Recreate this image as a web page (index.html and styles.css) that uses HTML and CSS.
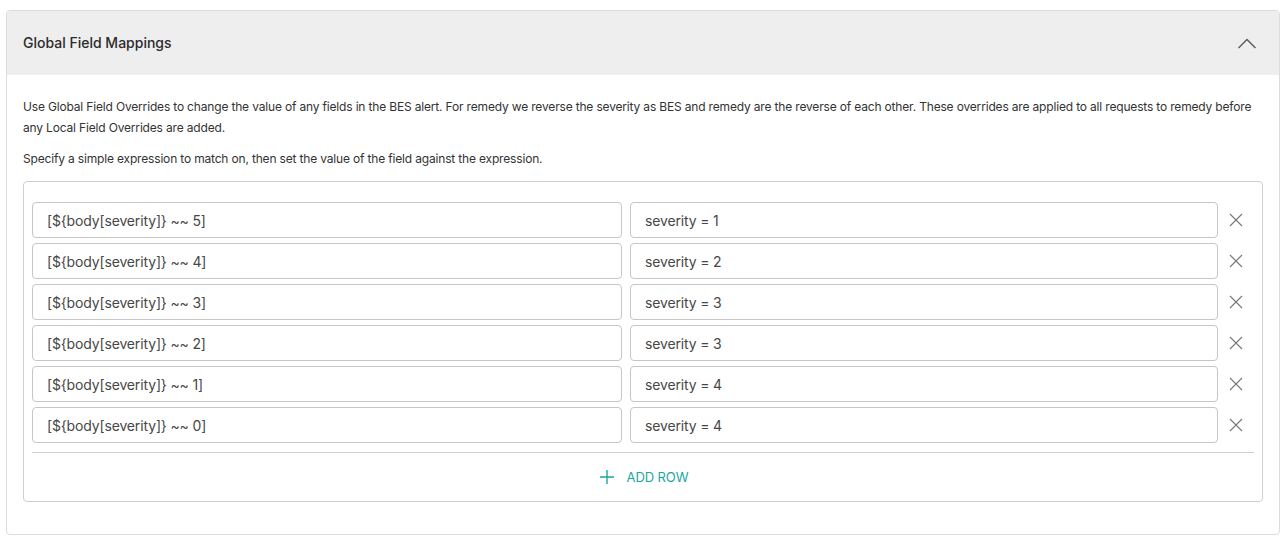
FILE: index.html
```html
<!DOCTYPE html>
<html>
<head>
<meta charset="utf-8">
<link rel="stylesheet" href="styles.css">
</head>
<body>
<div class="card">
  <div class="card-header">
    <div class="title">Global Field Mappings</div>
    <svg class="chevron" width="20" height="12" viewBox="0 0 20 12"><path d="M1.5 11 L10 2.5 L18.5 11" fill="none" stroke="#5f5f5f" stroke-width="1.5"/></svg>
  </div>
  <div class="card-body">
    <p class="desc">Use Global Field Overrides to change the value of any fields in the BES alert. For remedy we reverse the severity as BES and remedy are the reverse of each other. These overrides are applied to all requests to remedy before any Local Field Overrides are added.</p>
    <p class="desc second">Specify a simple expression to match on, then set the value of the field against the expression.</p>
    <div class="mappings">
      <div class="rows">
        <div class="row"><div class="input">[${body[severity]} ~~ 5]</div><div class="input">severity = 1</div><div class="remove"><svg width="14" height="14" viewBox="0 0 14 14"><path d="M1 1 L13 13 M13 1 L1 13" stroke="#777" stroke-width="1.1"/></svg></div></div>
        <div class="row"><div class="input">[${body[severity]} ~~ 4]</div><div class="input">severity = 2</div><div class="remove"><svg width="14" height="14" viewBox="0 0 14 14"><path d="M1 1 L13 13 M13 1 L1 13" stroke="#777" stroke-width="1.1"/></svg></div></div>
        <div class="row"><div class="input">[${body[severity]} ~~ 3]</div><div class="input">severity = 3</div><div class="remove"><svg width="14" height="14" viewBox="0 0 14 14"><path d="M1 1 L13 13 M13 1 L1 13" stroke="#777" stroke-width="1.1"/></svg></div></div>
        <div class="row"><div class="input">[${body[severity]} ~~ 2]</div><div class="input">severity = 3</div><div class="remove"><svg width="14" height="14" viewBox="0 0 14 14"><path d="M1 1 L13 13 M13 1 L1 13" stroke="#777" stroke-width="1.1"/></svg></div></div>
        <div class="row"><div class="input">[${body[severity]} ~~ 1]</div><div class="input">severity = 4</div><div class="remove"><svg width="14" height="14" viewBox="0 0 14 14"><path d="M1 1 L13 13 M13 1 L1 13" stroke="#777" stroke-width="1.1"/></svg></div></div>
        <div class="row"><div class="input">[${body[severity]} ~~ 0]</div><div class="input">severity = 4</div><div class="remove"><svg width="14" height="14" viewBox="0 0 14 14"><path d="M1 1 L13 13 M13 1 L1 13" stroke="#777" stroke-width="1.1"/></svg></div></div>
      </div>
      <div class="add-area">
        <div class="add-btn">
          <svg width="14" height="14" viewBox="0 0 14 14"><path d="M7 0 V14 M0 7 H14" stroke="#1ba89d" stroke-width="1.4"/></svg>
          <span>ADD ROW</span>
        </div>
      </div>
    </div>
  </div>
</div>
</body>
</html>
```

FILE: styles.css
```css
* { box-sizing: border-box; }
html, body { margin: 0; padding: 0; background: #fff; }
body {
  font-family: Inter, "Noto Sans", "Liberation Sans", sans-serif;
  color: #333;
  padding: 10px 6px 0 6px;
}
.card {
  border: 1px solid #dcdcdc;
  border-radius: 4px;
  width: 1274px;
  overflow: hidden;
}
.card-header {
  height: 64px;
  background: #eeeeee;
  display: flex;
  align-items: center;
  justify-content: space-between;
  padding: 0 22px 0 16px;
}
.title {
  font-size: 14px;
  font-weight: 500;
  color: #2b2b2b;
  margin-top: -1px;
}
.chevron { display: block; margin-top: -1px; }
.card-body {
  padding: 21px 16px 32px 16px;
}
.desc {
  margin: 0;
  font-size: 12px;
  line-height: 21px;
  letter-spacing: -0.17px;
  color: #333;
}
.desc.second { margin-top: 10px; }
.mappings {
  margin-top: 12px;
  border: 1px solid #cfcfcf;
  border-radius: 4px;
  padding: 20px 8px 0 8px;
}
.rows {
  display: flex;
  flex-direction: column;
  gap: 5px;
}
.row {
  display: grid;
  grid-template-columns: 590px 588px 35px;
  column-gap: 8px;
  align-items: center;
}
.input {
  height: 36px;
  border: 1px solid #c6c6c6;
  border-radius: 4px;
  padding: 0 14px;
  display: flex;
  align-items: center;
  font-size: 14px;
  letter-spacing: -0.15px;
  color: #474747;
}
.remove {
  display: flex;
  justify-content: flex-start;
  align-items: center;
  padding-left: 3px;
}
.remove svg { display: block; }
.add-area {
  margin-top: 9px;
  border-top: 1px solid #cfcfcf;
  padding: 12px 0 12px 0;
  display: flex;
  justify-content: center;
}
.add-btn {
  height: 24px;
  display: flex;
  align-items: center;
  gap: 13px;
  color: #1ba89d;
  font-size: 13px;
  letter-spacing: -0.1px;
  margin-left: 2px;
}
.add-btn svg { display: block; }
```
